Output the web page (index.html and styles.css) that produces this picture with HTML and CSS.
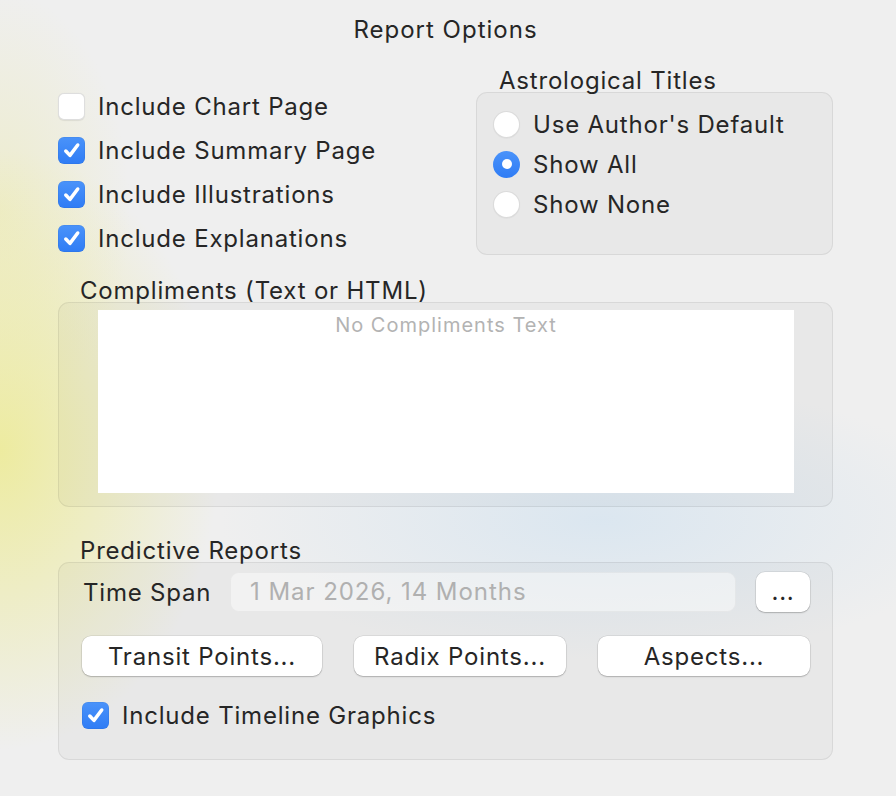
FILE: index.html
```html
<!DOCTYPE html>
<html>
<head>
<meta charset="utf-8">
<title>Report Options</title>
<link rel="stylesheet" href="styles.css">
</head>
<body>
<div class="window">
  <h1 class="title">Report Options</h1>

  <div class="top">
    <div class="checks">
      <label class="row"><span class="cb"></span><span>Include Chart Page</span></label>
      <label class="row"><span class="cb on"><svg viewBox="0 0 26 26"><path d="M7.5 13.5l4 4.2 7.5-10" /></svg></span><span>Include Summary Page</span></label>
      <label class="row"><span class="cb on"><svg viewBox="0 0 26 26"><path d="M7.5 13.5l4 4.2 7.5-10" /></svg></span><span>Include Illustrations</span></label>
      <label class="row"><span class="cb on"><svg viewBox="0 0 26 26"><path d="M7.5 13.5l4 4.2 7.5-10" /></svg></span><span>Include Explanations</span></label>
    </div>
    <div class="astro">
      <div class="glabel astro-label">Astrological Titles</div>
      <div class="group astro-box">
        <label class="rrow"><span class="radio"></span><span>Use Author's Default</span></label>
        <label class="rrow"><span class="radio on"></span><span>Show All</span></label>
        <label class="rrow"><span class="radio"></span><span>Show None</span></label>
      </div>
    </div>
  </div>

  <div class="glabel comp-label">Compliments (Text or HTML)</div>
  <div class="group comp-box">
    <div class="textarea"><span class="placeholder">No Compliments Text</span></div>
  </div>

  <div class="glabel pred-label">Predictive Reports</div>
  <div class="group pred-box">
    <div class="span-row">
      <span class="span-label">Time Span</span>
      <div class="field">1 Mar 2026, 14 Months</div>
      <button class="btn dots">...</button>
    </div>
    <div class="btn-row">
      <button class="btn transit">Transit Points...</button>
      <button class="btn radix">Radix Points...</button>
      <button class="btn aspects">Aspects...</button>
    </div>
    <label class="row timeline"><span class="cb on"><svg viewBox="0 0 26 26"><path d="M7.5 13.5l4 4.2 7.5-10" /></svg></span><span>Include Timeline Graphics</span></label>
  </div>
</div>
</body>
</html>
```

FILE: styles.css
```css
* { box-sizing: border-box; }
html, body {
  margin: 0;
  padding: 0;
  width: 896px;
  height: 796px;
  overflow: hidden;
}
body {
  font-family: Inter, "Liberation Sans", sans-serif;
  color: #262626;
  letter-spacing: 0.8px;
  background-color: #efefef;
  background-image:
    radial-gradient(ellipse 220px 300px at 0px 450px, rgba(237, 235, 155, 0.95), rgba(237, 235, 155, 0) 100%),
    radial-gradient(ellipse 130px 220px at 0px 210px, rgba(236, 234, 175, 0.55), rgba(236, 234, 175, 0) 100%),
    radial-gradient(ellipse 380px 140px at 600px 520px, rgba(218, 230, 240, 0.95), rgba(218, 230, 240, 0) 100%);
}
.window {
  padding: 0 63px 0 58px;
}
.title {
  margin: 0;
  padding-top: 15px;
  height: 69px;
  font-size: 24px;
  line-height: 30px;
  font-weight: 400;
  text-align: center;
  letter-spacing: 1px;
}
.top {
  display: flex;
  justify-content: space-between;
  height: 191px;
}
.checks {
  padding-top: 15px;
}
.row {
  display: flex;
  align-items: center;
  height: 44px;
  font-size: 24px;
}
.cb {
  width: 27px;
  height: 27px;
  border-radius: 6px;
  background: #fff;
  box-shadow: inset 0 0 0 1px rgba(0,0,0,0.13), 0 0.5px 1px rgba(0,0,0,0.08);
  margin-right: 13px;
  flex: none;
  display: flex;
}
.cb.on {
  background: linear-gradient(#4a93fa, #2f7cf5);
  box-shadow: inset 0 0 0 0.5px rgba(0,0,0,0.08);
}
.cb svg {
  width: 27px;
  height: 27px;
}
.cb svg path {
  fill: none;
  stroke: #fff;
  stroke-width: 3.4;
  stroke-linecap: round;
  stroke-linejoin: round;
}
.glabel {
  font-size: 24px;
  line-height: 23px;
  height: 23px;
}
.astro {
  width: 357px;
}
.astro-label {
  padding-left: 23px;
}
.group {
  border-radius: 11px;
  background: rgba(0, 0, 0, 0.028);
  box-shadow: inset 0 0 0 1px rgba(0, 0, 0, 0.065);
}
.astro-box {
  height: 163px;
  padding: 12px 0 0 17px;
}
.rrow {
  display: flex;
  align-items: center;
  height: 40px;
  font-size: 24px;
}
.radio {
  width: 27px;
  height: 27px;
  border-radius: 50%;
  background: #fff;
  box-shadow: inset 0 0 0 1px rgba(0,0,0,0.14), 0 0.5px 1px rgba(0,0,0,0.06);
  margin-right: 13px;
  flex: none;
  display: flex;
  align-items: center;
  justify-content: center;
}
.radio.on {
  background: linear-gradient(#4a93fa, #2f7cf5);
  box-shadow: none;
}
.radio.on::after {
  content: "";
  width: 10px;
  height: 10px;
  border-radius: 50%;
  background: #fff;
}
.comp-label {
  margin-top: 19px;
  padding-left: 22px;
}
.comp-box {
  height: 205px;
  padding: 8px 39px 14px 40px;
}
.textarea {
  height: 183px;
  background: #fff;
  text-align: center;
  padding-top: 3px;
}
.placeholder {
  font-size: 20px;
  line-height: 24px;
  letter-spacing: 1px;
  color: #b3b3b3;
}
.pred-label {
  margin-top: 32px;
  padding-left: 22px;
}
.pred-box {
  height: 198px;
  padding: 10px 23px 0 24px;
}
.span-row {
  display: flex;
  align-items: center;
  height: 40px;
}
.span-label {
  font-size: 24px;
  width: 148px;
  padding-left: 1px;
}
.field {
  width: 506px;
  height: 40px;
  border-radius: 9px;
  background: rgba(255, 255, 255, 0.45);
  box-shadow: inset 0 0 0 1px rgba(0, 0, 0, 0.04);
  color: #b0b0b0;
  font-size: 24px;
  line-height: 40px;
  padding-left: 20px;
  letter-spacing: 0.95px;
}
.btn {
  font-family: Inter, "Liberation Sans", sans-serif;
  font-size: 24px;
  letter-spacing: 0.8px;
  color: #262626;
  background: #fff;
  border: none;
  border-radius: 9px;
  height: 40px;
  padding: 0;
  box-shadow: 0 0 0 0.5px rgba(0,0,0,0.12), 0 1px 1.5px rgba(0,0,0,0.2);
}
.dots {
  width: 54px;
  margin-left: 20px;
  line-height: 40px;
}
.btn-row {
  display: flex;
  gap: 32px;
  margin-top: 24px;
}
.transit { width: 240px; }
.radix { width: 212px; }
.aspects { width: 212px; }
.timeline {
  margin-top: 9px;
  height: 60px;
}
```
